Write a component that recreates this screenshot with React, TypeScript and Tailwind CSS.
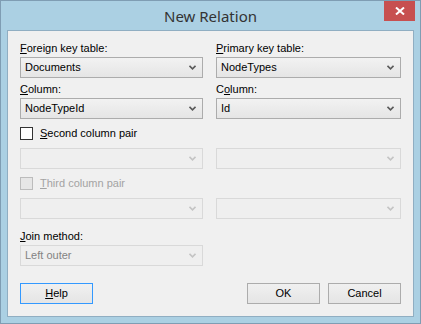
import React from "react";

const Chevron = ({ disabled }: { disabled?: boolean }) => (
  <svg width="7" height="5" viewBox="0 0 7 5" className="shrink-0">
    <path
      d="M0.5 0.8 L3.5 3.8 L6.5 0.8"
      fill="none"
      stroke={disabled ? "#c4c4c4" : "#5a5a5a"}
      strokeWidth="1.6"
    />
  </svg>
);

const Combo = ({
  value,
  disabled,
  width,
}: {
  value?: string;
  disabled?: boolean;
  width: string;
}) => (
  <div
    className={`${width} h-[21px] flex items-center justify-between pl-[4px] pr-[6px] border ${
      disabled
        ? "border-[#d9d9d9] bg-[#efefef] text-[#838383]"
        : "border-[#acacac] bg-gradient-to-b from-[#f2f2f2] to-[#e5e5e5] text-black"
    }`}
  >
    <span className="leading-[13px]">{value}</span>
    <Chevron disabled={disabled} />
  </div>
);

const Label = ({ mn, rest, pre }: { mn: string; rest: string; pre?: string }) => (
  <div className="h-[13px] leading-[13px] text-black">
    {pre}
    <span className="underline underline-offset-[1px]">{mn}</span>
    {rest}
  </div>
);

const Button = ({
  children,
  primary,
}: {
  children: React.ReactNode;
  primary?: boolean;
}) => (
  <div
    className={`w-[73px] h-[21px] flex items-center justify-center border bg-gradient-to-b from-[#f0f0f0] to-[#e5e5e5] text-black ${
      primary ? "border-[#3399ff]" : "border-[#acacac]"
    }`}
  >
    {children}
  </div>
);

export default function App() {
  return (
    <div
      className="w-[421px] h-[324px] border border-[#7f9db3] bg-[#abd0e3] flex flex-col text-[11px]"
      style={{ fontFamily: '"Liberation Sans", Arial, sans-serif' }}
    >
      <div className="relative h-[29px] shrink-0 flex items-center justify-center">
        <span
          className="text-[15px] text-[#333333] pt-[1px]"
          style={{ fontFamily: '"Noto Sans", "Open Sans", sans-serif' }}
        >
          New Relation
        </span>
        <div className="absolute right-[5px] top-0 w-[31px] h-[20px] bg-[#c75050] flex items-center justify-center">
          <svg width="10" height="8" viewBox="0 0 10 8">
            <path d="M1 0.5 L9 7.5 M9 0.5 L1 7.5" stroke="#fff" strokeWidth="2" />
          </svg>
        </div>
      </div>

      <div className="mx-[6px] h-[287px] border border-[#90aec2] bg-[#f0f0f0] pl-[12px] pt-[11px] flex flex-col">
        <div className="flex gap-[13px]">
          <div className="flex flex-col">
            <Label mn="F" rest="oreign key table:" />
            <div className="mt-[2px]">
              <Combo value="Documents" width="w-[183px]" />
            </div>
            <div className="mt-[5px]">
              <Label mn="C" rest="olumn:" />
            </div>
            <div className="mt-[2px]">
              <Combo value="NodeTypeId" width="w-[183px]" />
            </div>
          </div>
          <div className="flex flex-col">
            <Label mn="P" rest="rimary key table:" />
            <div className="mt-[2px]">
              <Combo value="NodeTypes" width="w-[185px]" />
            </div>
            <div className="mt-[5px]">
              <Label pre="C" mn="o" rest="lumn:" />
            </div>
            <div className="mt-[2px]">
              <Combo value="Id" width="w-[185px]" />
            </div>
          </div>
        </div>

        <div className="mt-[8px] h-[13px] flex items-center gap-[7px]">
          <div className="w-[13px] h-[13px] border border-[#333333] bg-white" />
          <span className="leading-[13px] text-black">
            <span className="underline underline-offset-[1px]">S</span>econd column pair
          </span>
        </div>

        <div className="mt-[8px] flex gap-[13px]">
          <Combo disabled width="w-[183px]" />
          <Combo disabled width="w-[185px]" />
        </div>

        <div className="mt-[8px] h-[13px] flex items-center gap-[7px]">
          <div className="w-[13px] h-[13px] border border-[#bcbcbc] bg-[#e6e6e6]" />
          <span className="leading-[13px] text-[#a3a3a3]">
            <span className="underline underline-offset-[1px]">T</span>hird column pair
          </span>
        </div>

        <div className="mt-[8px] flex gap-[13px]">
          <Combo disabled width="w-[183px]" />
          <Combo disabled width="w-[185px]" />
        </div>

        <div className="mt-[11px]">
          <Label mn="J" rest="oin method:" />
        </div>
        <div className="mt-[2px]">
          <Combo disabled value="Left outer" width="w-[183px]" />
        </div>

        <div className="mt-[17px] flex w-[381px] justify-between">
          <Button primary>
            <span>
              <span className="underline underline-offset-[1px]">H</span>elp
            </span>
          </Button>
          <div className="flex gap-[8px]">
            <Button>OK</Button>
            <Button>Cancel</Button>
          </div>
        </div>
      </div>
    </div>
  );
}
